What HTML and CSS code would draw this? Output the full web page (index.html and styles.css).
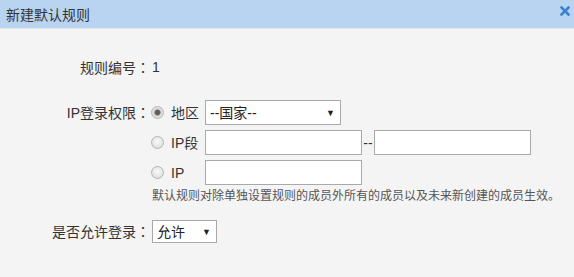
FILE: index.html
```html
<!DOCTYPE html>
<html>
<head>
<meta charset="utf-8">
<title>新建默认规则</title>
<link rel="stylesheet" href="styles.css">
</head>
<body>
<div class="dialog">
  <div class="dlg-head">
    <span class="dlg-title">新建默认规则</span>
    <span class="dlg-close" title="关闭">
      <svg width="10" height="10" viewBox="0 0 10 10"><path d="M1.5 1.5L8.5 8.5M8.5 1.5L1.5 8.5" stroke="#3b82cf" stroke-width="2.6" stroke-linecap="square"/></svg>
    </span>
  </div>

  <div class="dlg-body">
    <div class="row row-id">
      <span class="lbl">规则编号<span class="colon">：</span></span>
      <span class="val">1</span>
    </div>

    <div class="row row-ip">
      <span class="lbl">IP登录权限<span class="colon">：</span></span>
      <div class="opts">
        <div class="opt">
          <input type="radio" name="iptype" checked>
          <span class="opt-name">地区</span>
          <span class="sel sel-wide">
            <select><option>--国家--</option></select>
            <span class="arrow">&#9660;</span>
          </span>
        </div>
        <div class="opt">
          <input type="radio" name="iptype">
          <span class="opt-name">IP段</span>
          <input type="text" class="txt">
          <span class="dash">--</span>
          <input type="text" class="txt">
        </div>
        <div class="opt">
          <input type="radio" name="iptype">
          <span class="opt-name">IP</span>
          <input type="text" class="txt">
        </div>
        <div class="hint">默认规则对除单独设置规则的成员外所有的成员以及未来新创建的成员生效。</div>
      </div>
    </div>

    <div class="row row-allow">
      <span class="lbl">是否允许登录<span class="colon">：</span></span>
      <span class="sel sel-short">
        <select><option>允许</option><option>禁止</option></select>
        <span class="arrow">&#9660;</span>
      </span>
    </div>
  </div>
</div>
</body>
</html>
```

FILE: styles.css
```css
body {
  margin: 0;
  background: #f4f4f4;
  font-family: "Liberation Sans", "Noto Sans CJK SC", sans-serif;
  font-size: 14px;
  color: #333;
}
.dlg-head {
  height: 28px;
  background: #b8d4f1;
  border-bottom: 1px solid #e6e6e6;
  display: flex;
  align-items: center;
  justify-content: space-between;
  padding: 0 4px 0 6px;
}
.dlg-title {
  font-size: 14px;
  color: #333;
}
.dlg-close {
  display: flex;
  margin-top: -6px;
}
.dlg-body {
  padding-top: 28px;
}
.row {
  display: flex;
  align-items: flex-start;
}
.lbl {
  width: 150px;
  text-align: right;
  flex: none;
  line-height: 20px;
}
.colon {
  font-family: "Noto Sans CJK TC", sans-serif;
}
.val {
  line-height: 20px;
  padding-left: 2px;
}
.row-ip {
  margin-top: 22px;
}
.row-ip .lbl {
  line-height: 25px;
}
.opts {
  display: flex;
  flex-direction: column;
  gap: 5px;
}
.opt {
  display: flex;
  align-items: center;
  height: 25px;
}
input[type=radio] {
  appearance: none;
  -webkit-appearance: none;
  width: 13px;
  height: 13px;
  margin: 0 7px 0 1px;
  border: 1px solid #b4b4b4;
  border-radius: 50%;
  background: radial-gradient(circle at 50% 40%, #fafafa 0%, #e2e2e2 70%, #d4d4d4 100%);
  flex: none;
}
input[type=radio]:checked {
  background: radial-gradient(circle, #555 0, #666 2.5px, #d8d8d8 3.5px, #eee 100%);
}
.opt-name {
  width: 34px;
  flex: none;
  line-height: 20px;
}
.txt {
  width: 157px;
  height: 25px;
  box-sizing: border-box;
  border: 1px solid #a9a9a9;
  background: #fff;
  margin: 0;
  padding: 0 4px;
  font: inherit;
}
.dash {
  width: 12px;
  text-align: center;
  color: #333;
}
.hint {
  font-size: 12px;
  color: #555;
  line-height: 18px;
  margin-top: -3px;
  padding-left: 2px;
}
.sel {
  position: relative;
  display: inline-flex;
}
.sel select {
  appearance: none;
  -webkit-appearance: none;
  box-sizing: border-box;
  border: 1px solid #a9a9a9;
  border-radius: 0;
  background: #fff;
  margin: 0;
  padding: 0 4px;
  font: inherit;
  font-size: 14px;
  color: #222;
}
.sel-wide select {
  width: 136px;
  height: 25px;
}
.sel-short select {
  width: 65px;
  height: 23px;
}
.sel .arrow {
  position: absolute;
  right: 6px;
  top: 50%;
  transform: translateY(-50%);
  font-size: 9px;
  color: #222;
  pointer-events: none;
}
.row-allow {
  margin-top: 15px;
  align-items: center;
}
.row-allow .sel {
  margin-left: 2px;
}
```
